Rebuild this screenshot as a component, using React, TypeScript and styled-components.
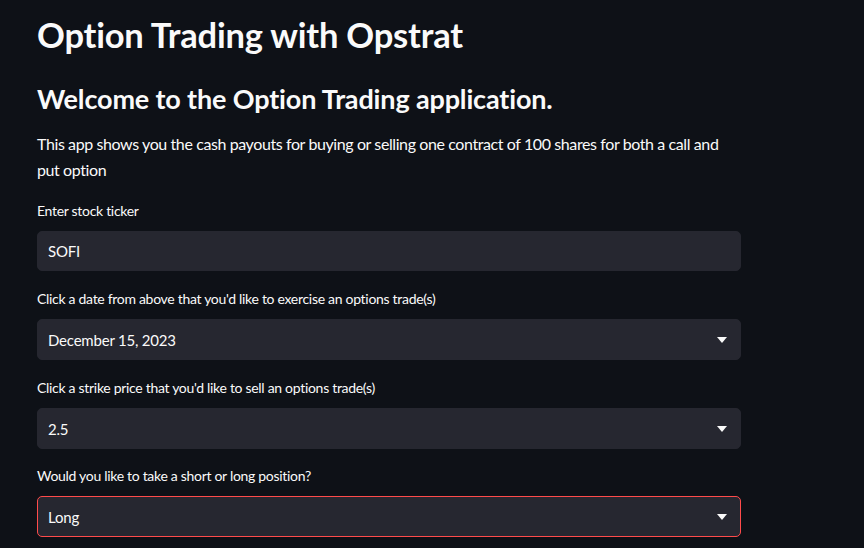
import React from "react";
import styled, { createGlobalStyle } from "styled-components";

const Global = createGlobalStyle`
  html, body { margin: 0; padding: 0; background: #0e1117; }
  body { font-family: "Lato", "Liberation Sans", sans-serif; color: #fafafa; }
  * { box-sizing: border-box; }
`;

const Page = styled.main`
  width: 864px;
  height: 548px;
  overflow: hidden;
  background: #0e1117;
  padding: 13px 0 0 37px;
`;

const Column = styled.div`
  width: 704px;
  display: flex;
  flex-direction: column;
`;

const Title = styled.h1`
  margin: 0;
  font-size: 34.5px;
  line-height: 44px;
  font-weight: 700;
  letter-spacing: -0.2px;
`;

const Subtitle = styled.h2`
  margin: 24px 0 0;
  font-size: 27px;
  line-height: 36px;
  font-weight: 700;
  letter-spacing: -0.15px;
`;

const Paragraph = styled.p`
  margin: 14px 0 0;
  font-size: 16px;
  line-height: 26px;
  letter-spacing: -0.4px;
`;

const Field = styled.div<{ $gap: number }>`
  display: flex;
  flex-direction: column;
  margin-top: ${(p) => p.$gap}px;
`;

const Label = styled.label`
  font-size: 14px;
  line-height: 20px;
  margin-bottom: 10px;
  letter-spacing: -0.3px;
`;

const Control = styled.div<{ $active?: boolean; $h?: number }>`
  height: ${(p) => p.$h ?? 41}px;
  background: #262730;
  border-radius: 5px;
  border: 1px solid ${(p) => (p.$active ? "#ff4b4b" : "#262730")};
  display: flex;
  align-items: center;
  justify-content: space-between;
  padding: 0 13px 0 10px;
  font-size: 15px;
  letter-spacing: -0.2px;
`;

const Value = styled.span`
  color: #fafafa;
`;

const Caret = () => (
  <svg width="10" height="6" viewBox="0 0 10 6">
    <path d="M0 0 H10 L5 6 Z" fill="#fafafa" />
  </svg>
);

const Select = ({ value, active }: { value: string; active?: boolean }) => (
  <Control $active={active}>
    <Value>{value}</Value>
    <Caret />
  </Control>
);

export default function App() {
  return (
    <>
      <Global />
      <Page>
        <Column>
          <Title>Option Trading with Opstrat</Title>
          <Subtitle>Welcome to the Option Trading application.</Subtitle>
          <Paragraph>
            This app shows you the cash payouts for buying or selling one contract of 100 shares
            for both a call and put option
          </Paragraph>
          <Field $gap={18}>
            <Label>Enter stock ticker</Label>
            <Control $h={40}>
              <Value>SOFI</Value>
            </Control>
          </Field>
          <Field $gap={18}>
            <Label>Click a date from above that you'd like to exercise an options trade(s)</Label>
            <Select value="December 15, 2023" />
          </Field>
          <Field $gap={18}>
            <Label>Click a strike price that you'd like to sell an options trade(s)</Label>
            <Select value="2.5" />
          </Field>
          <Field $gap={17}>
            <Label>Would you like to take a short or long position?</Label>
            <Select value="Long" active />
          </Field>
        </Column>
      </Page>
    </>
  );
}
